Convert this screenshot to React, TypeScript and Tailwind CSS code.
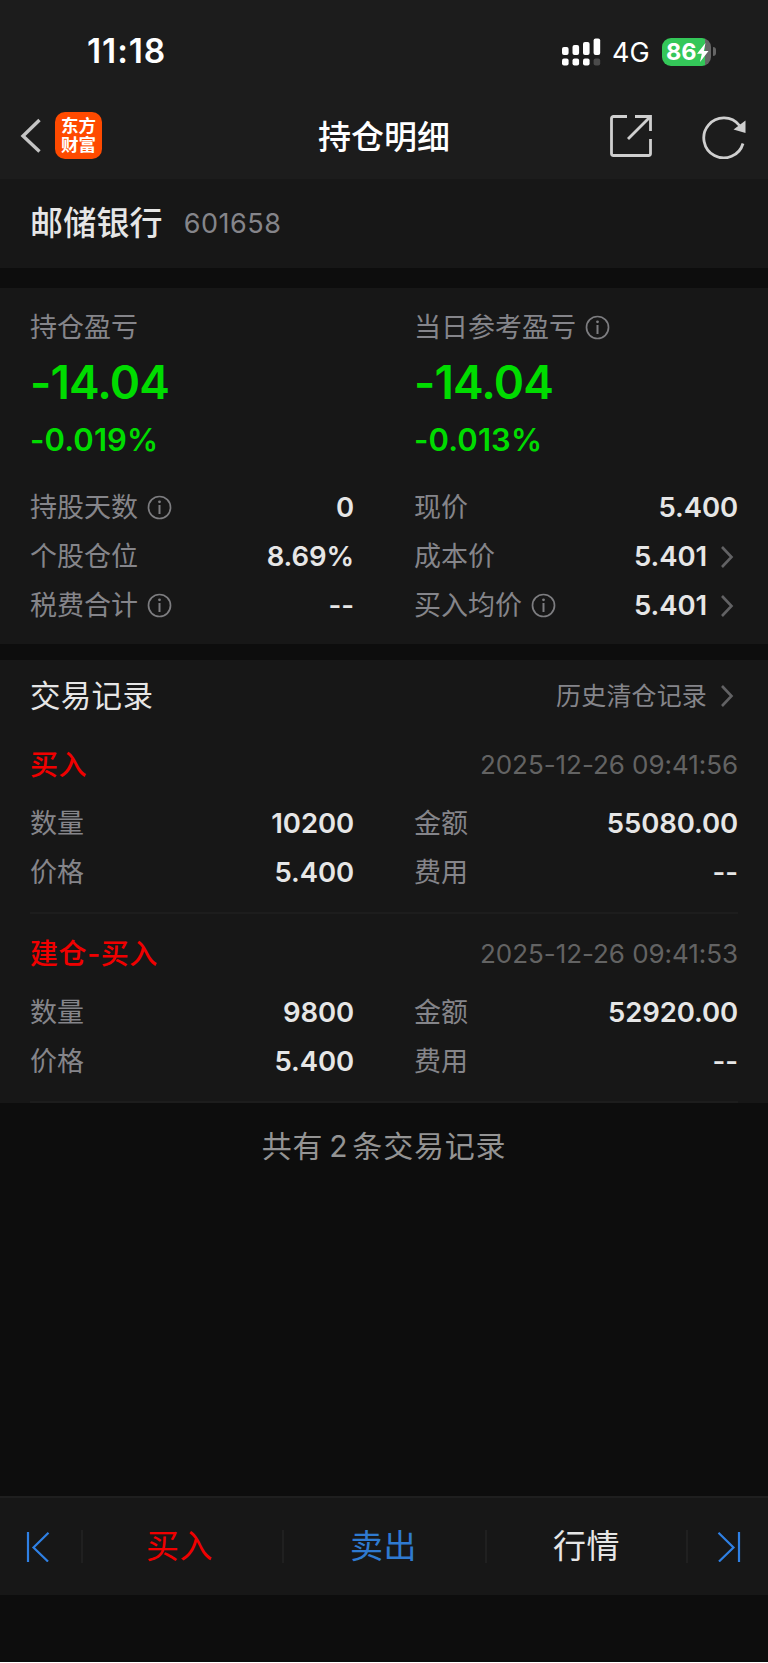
import { ReactNode } from 'react';

interface Trade {
  id: string;
  type: string;
  time: string;
  quantity: string;
  amount: string;
  price: string;
  fee: string;
}

const trades: Trade[] = [
  {
    id: 't2',
    type: '买入',
    time: '2025-12-26 09:41:56',
    quantity: '10200',
    amount: '55080.00',
    price: '5.400',
    fee: '--',
  },
  {
    id: 't1',
    type: '建仓-买入',
    time: '2025-12-26 09:41:53',
    quantity: '9800',
    amount: '52920.00',
    price: '5.400',
    fee: '--',
  },
];

function InfoIcon() {
  return (
    <svg className="ml-[9px] size-[25px] shrink-0" viewBox="0 0 25 25" fill="none" stroke="#7d7d80">
      <circle cx="12.5" cy="12.5" r="11" strokeWidth="1.7" />
      <path d="M12.5 10v9" strokeWidth="2" />
      <circle cx="12.5" cy="6.800" r="1.400" fill="#7d7d80" stroke="none" />
    </svg>
  );
}

function Chevron() {
  return (
    <svg className="ml-[13px] mr-[4px] h-[22px] w-[14px] shrink-0" viewBox="0 0 14 22" fill="none">
      <path d="M2 1l9.500 10L2 21" stroke="#626264" strokeWidth="2.600" />
    </svg>
  );
}

function StatusBar() {
  return (
    <div className="flex h-[91px] items-center justify-between pl-[87px] pr-[52px] pt-[12px]">
      <span className="pt-[1px] text-[33.500px] font-semibold leading-none tracking-[0.900px] text-white">11:18</span>
      <div className="flex items-center">
        <svg className="h-[28px] w-[39px]" viewBox="0 0 39 28" fill="#fff">
          <rect x="0" y="9" width="6.6" height="8" rx="2" />
          <rect x="10.5" y="7" width="6.6" height="10" rx="2" />
          <rect x="21" y="4" width="6.6" height="13" rx="2" />
          <rect x="31.6" y="0.5" width="6.6" height="16.5" rx="2" />
          <rect x="0" y="20.5" width="6.6" height="7" rx="2" />
          <rect x="10.5" y="20.5" width="6.6" height="7" rx="2" />
          <rect x="21" y="20.5" width="6.6" height="7" rx="2" />
          <rect x="31.6" y="20.5" width="6.6" height="7" rx="2" fill="#4b4b4b" />
        </svg>
        <span className="ml-[11px] w-[50px] pt-[1px] text-[27px] leading-none text-white">4G</span>
        <div className="relative flex h-[28px] w-[49px] items-center overflow-hidden rounded-[9px] bg-[linear-gradient(90deg,#34c759_43px,#656565_43px)] pl-[4px]">
          <span className="text-[23.500px] font-bold leading-none text-white">86</span>
          <svg className="absolute left-[35px] top-[5px] h-[19px] w-[12px]" viewBox="0 0 12 19" fill="#fff">
            <path d="M8.500 0L0 10.700h4.800L3 19l8.500-11H6.800z" />
          </svg>
        </div>
        <div className="ml-[2px] h-[9px] w-[3px] rounded-r-full bg-[#656565]" />
      </div>
    </div>
  );
}

function NavBar() {
  return (
    <div className="grid h-[88px] grid-cols-3 items-center pl-[20px] pr-[21px]">
      <div className="flex items-center">
        <svg className="h-[36px] w-[22px]" viewBox="0 0 22 36" fill="none">
          <path d="M19.500 3L3 19l16.500 15.500" stroke="#c4c4c4" strokeWidth="3.400" />
        </svg>
        <div className="ml-[13px] flex size-[47px] flex-col items-center justify-center rounded-[10px] bg-[#ff4a00] text-[17.500px] font-bold leading-[19px] text-white">
          <span>东方</span>
          <span>财富</span>
        </div>
      </div>
      <h1 className="pl-[1px] pt-[4px] text-center text-[33px] font-medium leading-none text-white">持仓明细</h1>
      <div className="flex items-center justify-end pt-[2px]">
        <svg className="size-[44px]" viewBox="0 0 44 44" fill="none" stroke="#cfcfcf" strokeWidth="2.800">
          <path d="M18 2.500H4.500a2 2 0 0 0-2 2v35a2 2 0 0 0 2 2h35a2 2 0 0 0 2-2V25" />
          <path d="M26 2.500h15.500V17" />
          <path d="M41 3L19 25" />
        </svg>
        <svg className="ml-[49px] size-[45px]" viewBox="0 0 45 45" fill="none">
          <path d="M41 29.500A20 20 0 1 1 37.500 11.500" stroke="#cfcfcf" strokeWidth="2.800" />
          <path d="M43.500 6.500v12.500l-12-3.500z" fill="#cfcfcf" />
        </svg>
      </div>
    </div>
  );
}

function Label({ children }: { children: ReactNode }) {
  return <span className="text-[27px] leading-none text-[#85858a]">{children}</span>;
}

interface FieldProps {
  label: string;
  value: string;
  info?: boolean;
  link?: boolean;
}

function Field({ label, value, info, link }: FieldProps) {
  return (
    <div className="flex h-[49px] items-center">
      <Label>{label}</Label>
      {info && <InfoIcon />}
      <span className="ml-auto text-[27.500px] font-semibold leading-none tracking-[-0.100px] text-[#e6e6e6]">
        {value}
      </span>
      {link && <Chevron />}
    </div>
  );
}

interface ProfitProps {
  label: string;
  amount: string;
  percent: string;
  info?: boolean;
}

function Profit({ label, amount, percent, info }: ProfitProps) {
  return (
    <div className="pb-[15px] text-[#00dc00]">
      <div className="flex h-[49px] items-center">
        <Label>{label}</Label>
        {info && <InfoIcon />}
      </div>
      <div className="flex h-[60px] items-center text-[46px] font-semibold leading-none tracking-[-0.900px]">
        {amount}
      </div>
      <div className="flex h-[56px] items-center pb-[2px] text-[31px] font-semibold leading-none tracking-[0.100px]">
        {percent}
      </div>
    </div>
  );
}

function TradeRecord({ trade }: { trade: Trade }) {
  return (
    <div className="mx-[30px] h-[189px] border-b-2 border-[#1d1d1d]">
      <div className="flex h-[74px] items-center justify-between pt-[5px]">
        <span className="text-[28px] font-medium leading-none tracking-[0.600px] text-[#f00000]">
          {trade.type}
        </span>
        <span className="text-[26px] leading-none tracking-[-0.050px] text-[#636363]">{trade.time}</span>
      </div>
      <div className="grid grid-cols-2 gap-x-[60px]">
        <Field label="数量" value={trade.quantity} />
        <Field label="金额" value={trade.amount} />
        <Field label="价格" value={trade.price} />
        <Field label="费用" value={trade.fee} />
      </div>
    </div>
  );
}

function BottomBar() {
  return (
    <div className="flex h-[99px] items-center border-t-2 border-[#1f1f1f] bg-[#171717] text-[33px] leading-none tracking-[0.500px]">
      <div className="flex w-[81px] justify-center pr-[5px]">
        <svg className="h-[30px] w-[24px]" viewBox="0 0 24 30" fill="none" stroke="#2f80e4" strokeWidth="2.200">
          <path d="M2 0v30M22.500 0.800L7.500 15.500l14.500 14" />
        </svg>
      </div>
      <button className="h-[33px] w-[201px] border-l-2 border-[#202020] pr-[6px] text-[#f00000]">买入</button>
      <button className="h-[33px] w-[203px] border-l-2 border-[#202020] pr-[2px] text-[#2f7ad0]">卖出</button>
      <button className="h-[33px] w-[201px] border-l-2 border-[#202020] text-[#e6e6e6]">行情</button>
      <div className="flex h-[33px] w-[82px] items-center justify-center border-l-2 border-[#202020] pl-[2px]">
        <svg className="h-[30px] w-[24px]" viewBox="0 0 24 30" fill="none" stroke="#2f80e4" strokeWidth="2.200">
          <path d="M22 0v30M1.500 0.800L16.500 15.500L2 29.500" />
        </svg>
      </div>
    </div>
  );
}

export default function App() {
  return (
    <div className="h-[1663px] w-[768px] bg-white font-['Inter','Noto_Sans_CJK_SC',sans-serif]">
      <div className="flex h-[1662px] flex-col bg-[#0d0d0d]">
        <header className="h-[179px] bg-[#1c1c1c]">
          <StatusBar />
          <NavBar />
        </header>

        <section className="flex h-[89px] items-center bg-[#171717] px-[30px]">
          <span className="text-[33px] font-medium leading-none tracking-[0.200px] text-[#e6e6e6]">邮储银行</span>
          <span className="ml-[21px] text-[27px] leading-none tracking-[0.500px] text-[#85858a]">601658</span>
        </section>

        <section className="mt-[20px] grid h-[356px] grid-cols-2 content-start gap-x-[60px] bg-[#171717] px-[30px] pt-[15px]">
          <Profit label="持仓盈亏" amount="-14.04" percent="-0.019%" />
          <Profit label="当日参考盈亏" amount="-14.04" percent="-0.013%" info />
          <Field label="持股天数" value="0" info />
          <Field label="现价" value="5.400" />
          <Field label="个股仓位" value="8.69%" />
          <Field label="成本价" value="5.401" link />
          <Field label="税费合计" value="--" info />
          <Field label="买入均价" value="5.401" info link />
        </section>

        <section className="mt-[16px] bg-[#171717]">
          <div className="flex h-[65px] items-center justify-between px-[30px] pt-[7px]">
            <h2 className="text-[30.500px] leading-none tracking-[0.300px] text-[#e6e6e6]">交易记录</h2>
            <div className="flex items-center text-[25px] leading-none tracking-[0.150px] text-[#85858a]">
              历史清仓记录
              <Chevron />
            </div>
          </div>
          {trades.map((trade) => (
            <TradeRecord key={trade.id} trade={trade} />
          ))}
        </section>

        <p className="mt-[27px] text-center text-[30px] leading-[32px] tracking-[0.800px] text-[#949494]">
          共有<span className="ml-[6px] mr-[4px]">{trades.length}</span>条交易记录
        </p>

        <div className="mb-[67px] mt-auto">
          <BottomBar />
        </div>
      </div>
    </div>
  );
}
